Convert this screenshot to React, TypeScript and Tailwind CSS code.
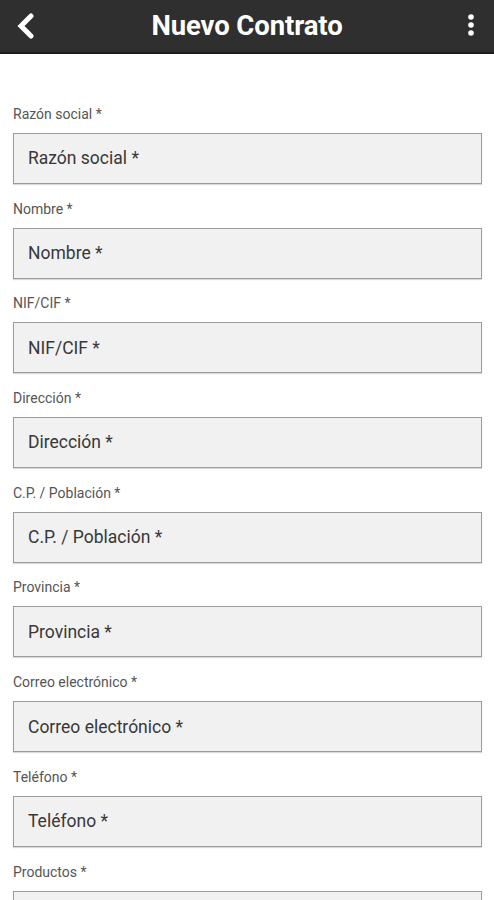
import React from 'react';

const FIELDS = [
  'Razón social *',
  'Nombre *',
  'NIF/CIF *',
  'Dirección *',
  'C.P. / Población *',
  'Provincia *',
  'Correo electrónico *',
  'Teléfono *',
  'Productos *',
];

export default function App() {
  return (
    <div className="h-[900px] overflow-hidden bg-white" style={{ fontFamily: 'Roboto, "Liberation Sans", sans-serif' }}>
      <header className="h-[54px] bg-[#2f2f2f] border-b-2 border-[#1c1c1c] flex items-center justify-between px-[14px]">
        <svg width="22" height="26" viewBox="0 0 22 26" className="ml-[1px]">
          <path d="M16 3 L6 13 L16 23" fill="none" stroke="#fff" strokeWidth="5" strokeLinecap="round" strokeLinejoin="miter" />
        </svg>
        <h1 className="text-white text-[27.5px] font-bold tracking-[-0.1px] mr-[8px]">Nuevo Contrato</h1>
        <svg width="12" height="26" viewBox="0 0 12 26" className="mr-[3px]">
          <circle cx="6" cy="4" r="2.8" fill="#fff" />
          <circle cx="6" cy="12" r="2.8" fill="#fff" />
          <circle cx="6" cy="20" r="2.8" fill="#fff" />
        </svg>
      </header>

      <form className="pt-[50px] pl-[13px] pr-[12px] flex flex-col">
        {FIELDS.map(label => (
          <div key={label} className="flex flex-col mb-[14.7px]">
            <label className="h-[20px] leading-[20px] text-[14px] text-[#555] mb-[9px]">{label}</label>
            <div className="h-[51px] bg-[#f1f1f1] border border-[#9c9c9c] shadow-[0_1px_1px_rgba(0,0,0,0.15)] flex items-center pl-[14px] text-[17.5px] font-normal text-[#383838]">
              {label}
            </div>
          </div>
        ))}
      </form>
    </div>
  );
}
